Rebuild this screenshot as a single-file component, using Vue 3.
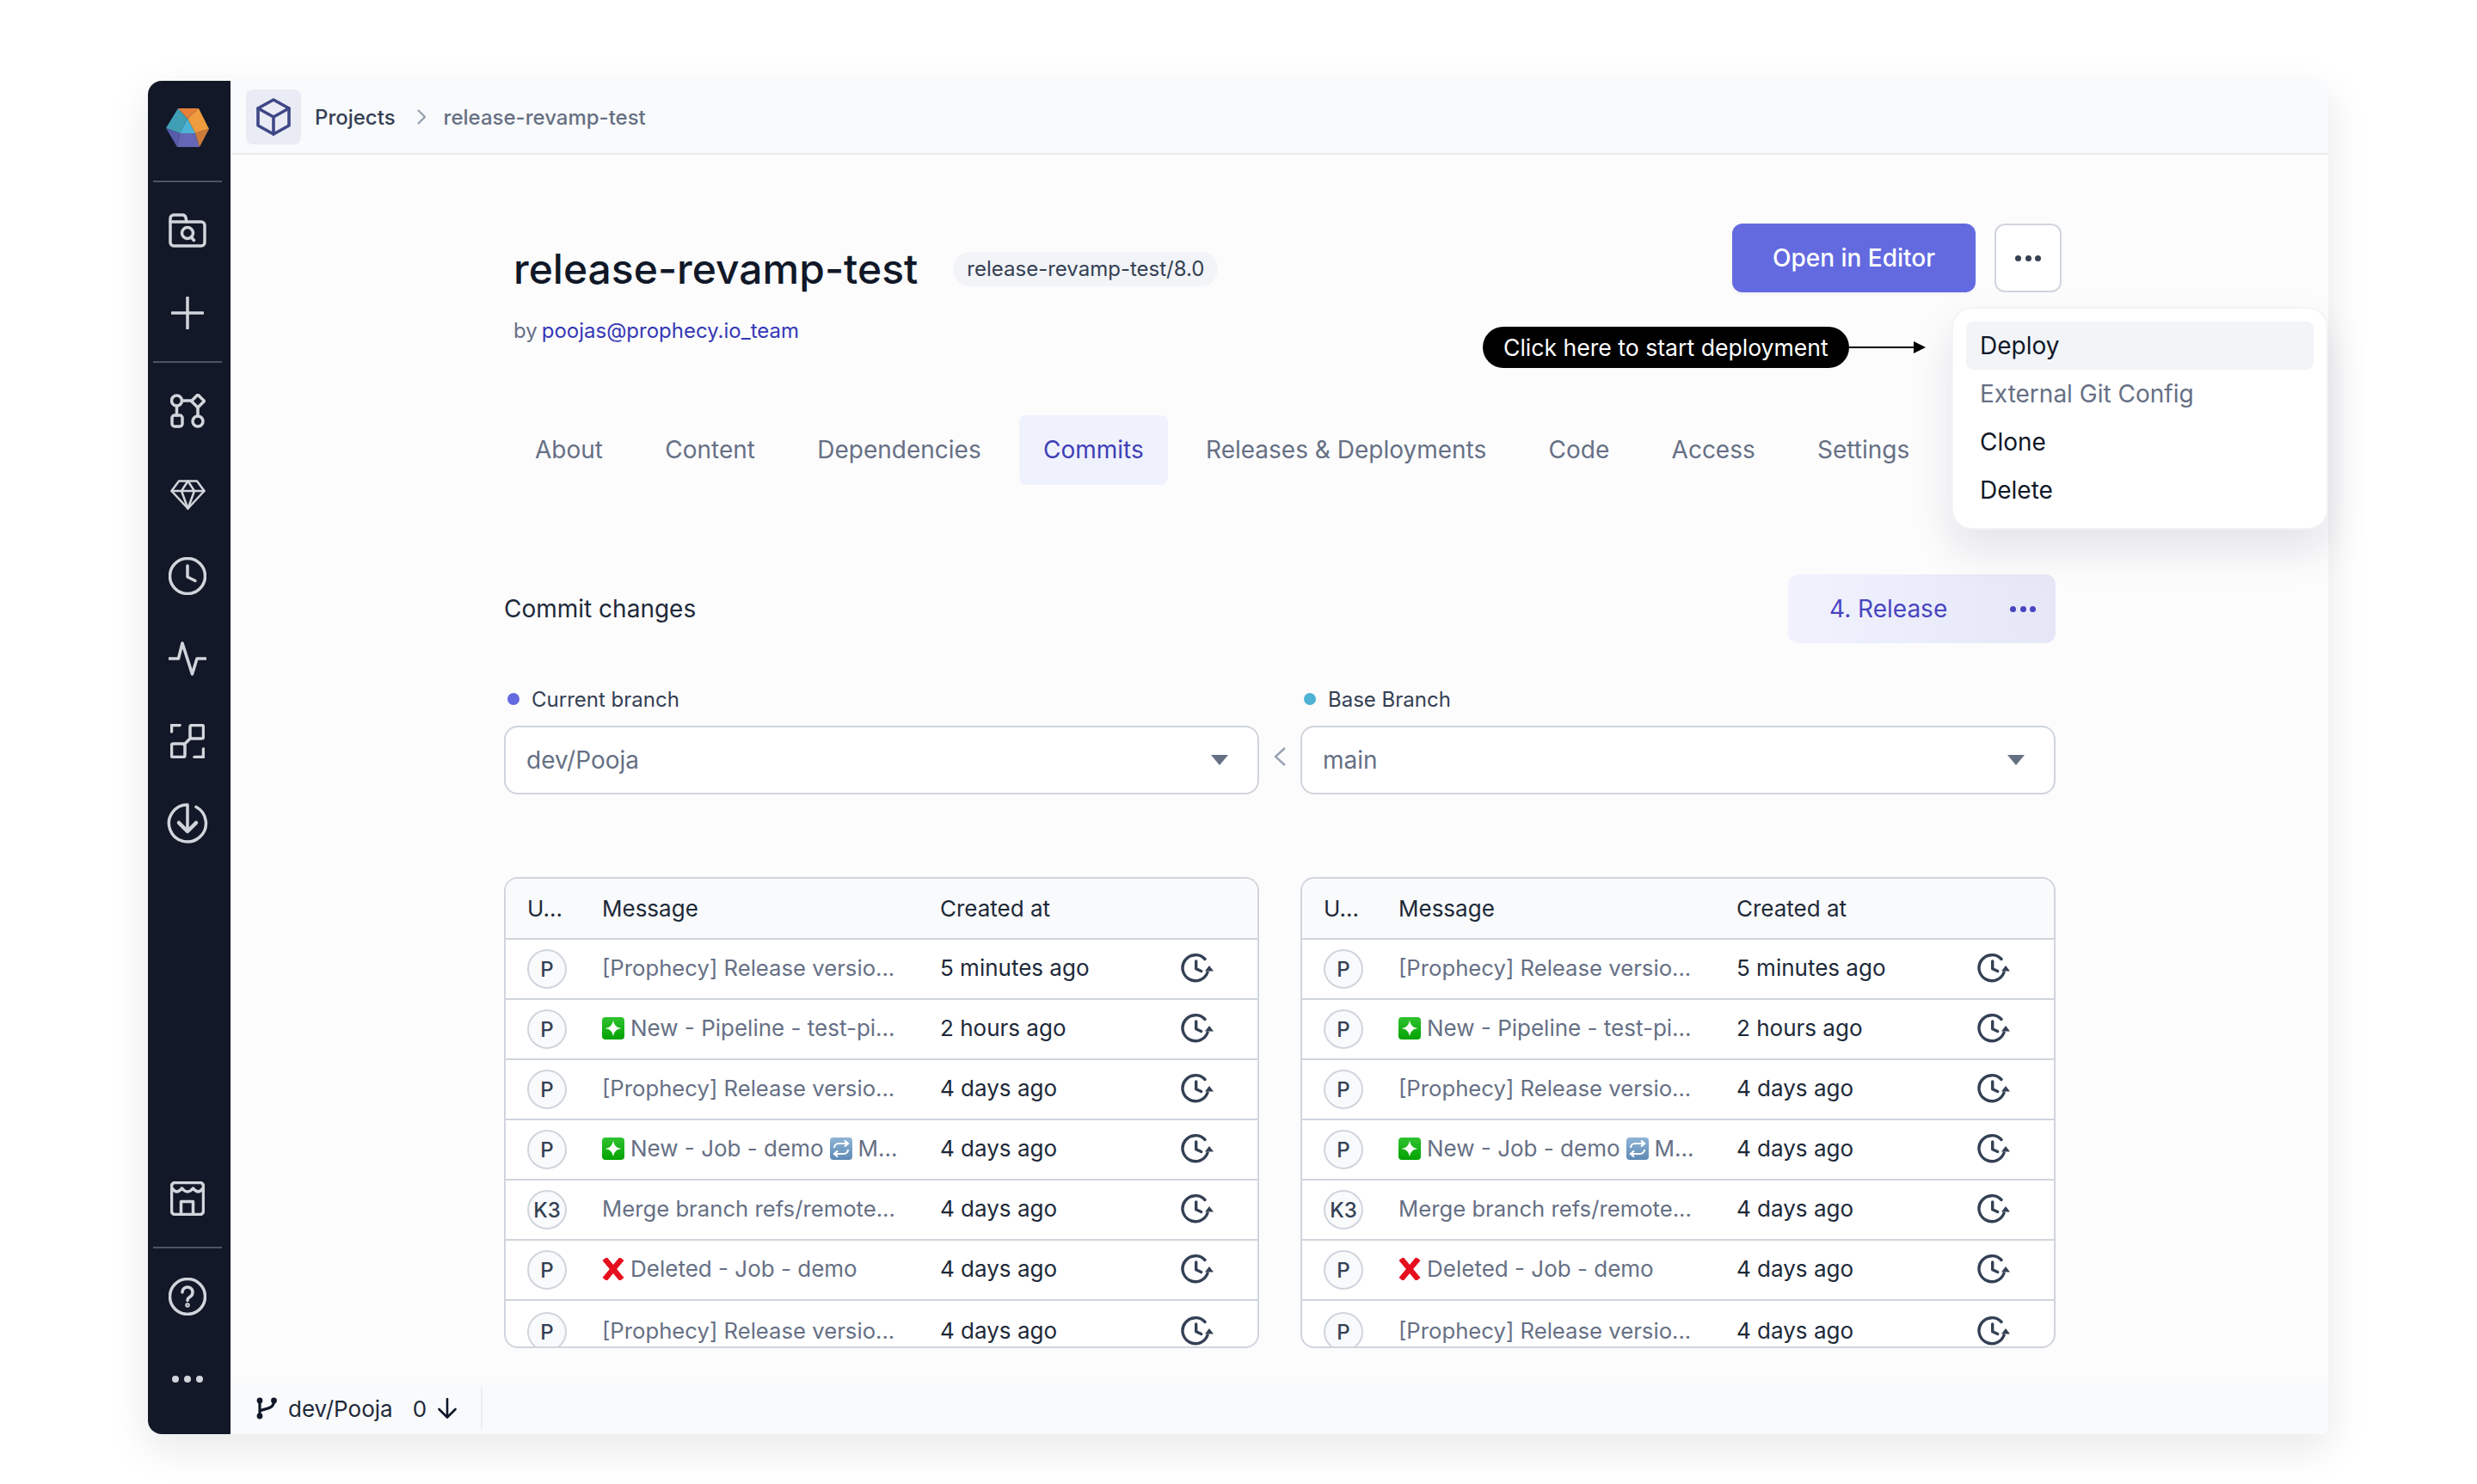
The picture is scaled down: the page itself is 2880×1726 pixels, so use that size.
<script setup>
const rows = [
  { a: 'P', icon: 'new', text: '[Prophecy] Release versio...', plain: true, time: '5 minutes ago' },
  { a: 'P', icon: 'new', text: 'New - Pipeline - test-pi...', time: '2 hours ago' },
  { a: 'P', icon: 'new', text: '[Prophecy] Release versio...', plain: true, time: '4 days ago' },
  { a: 'P', icon: 'new', text: 'New - Job - demo', extra: 'M...', time: '4 days ago' },
  { a: 'K3', icon: 'new', text: 'Merge branch refs/remote...', plain: true, time: '4 days ago' },
  { a: 'P', icon: 'del', text: 'Deleted - Job - demo', time: '4 days ago' },
  { a: 'P', icon: 'new', text: '[Prophecy] Release versio...', plain: true, time: '4 days ago' }
]
const tables = ['left', 'right']
const tabs = ['About', 'Content', 'Dependencies', 'Commits', 'Releases & Deployments', 'Code', 'Access', 'Settings']
const menu = ['Deploy', 'External Git Config', 'Clone', 'Delete']
</script>

<template>
  <div class="page">
    <svg width="0" height="0" class="defs">
      <defs>
        <linearGradient id="greenFill" x1="0" y1="0" x2="0" y2="1">
          <stop offset="0" stop-color="#2fc32f" />
          <stop offset="1" stop-color="#03a203" />
        </linearGradient>
        <linearGradient id="blueFill" x1="0" y1="0" x2="0" y2="1">
          <stop offset="0" stop-color="#8fb4d6" />
          <stop offset="1" stop-color="#5f8ab5" />
        </linearGradient>
      </defs>
    </svg>
    <div class="window">
      <aside class="rail">
        <div class="rail-logo">
          <svg width="50" height="46" viewBox="0 0 50 46">
            <polygon points="14,0 25,12 16,29 0,23" fill="#3f9fb5" />
            <polygon points="14,0 38,0 25,12" fill="#e57f3a" />
            <polygon points="38,0 50,24 34,29 25,12" fill="#ee9c3e" />
            <polygon points="25,12 34,29 16,29" fill="#4db2d4" />
            <polygon points="0,23 16,29 13,45" fill="#575cab" />
            <polygon points="16,29 34,29 39,45 13,45" fill="#6467b5" />
            <polygon points="50,24 39,45 34,29" fill="#cd7c3c" />
          </svg>
        </div>
        <div class="rail-sep"></div>
        <div class="rail-group">
          <div class="rail-item">
            <svg width="44" height="40" viewBox="0 0 44 40" class="ico">
              <path d="M2 11V6a4 4 0 0 1 4-4h10a4 4 0 0 1 4 3l1 5h17a4 4 0 0 1 4 4v20a4 4 0 0 1-4 4H6a4 4 0 0 1-4-4Z" />
              <path d="M2 10h19" />
              <circle cx="22" cy="23" r="6.5" />
              <path d="M26.5 28l3 3.5" />
            </svg>
          </div>
          <div class="rail-item">
            <svg width="38" height="38" viewBox="0 0 38 38" class="ico"><path d="M19 1v36M1 19h36" /></svg>
          </div>
        </div>
        <div class="rail-sep"></div>
        <div class="rail-group">
          <div class="rail-item">
            <svg width="41" height="40" viewBox="0 0 41 40" class="ico">
              <circle cx="7.5" cy="8" r="6" />
              <path d="M32 1l7.500 7.500L32 16l-7.500-7.500Z" />
              <rect x="2" y="25" width="12" height="13" rx="3" />
              <circle cx="32" cy="32" r="6" />
              <path d="M13.500 8h11M7.500 14v11M32 16v10" />
            </svg>
          </div>
          <div class="rail-item gem">
            <svg width="41" height="35" viewBox="0 0 41 35" class="ico thin">
              <path d="M10 1.500h21l8.500 11.500L20.500 33.500 1.500 13Z" />
              <path d="M1.500 13h38M13 13l7.500-11.500L28 13M13 13l7.500 20.500L28 13" />
            </svg>
          </div>
          <div class="rail-item">
            <svg width="44" height="44" viewBox="0 0 44 44" class="ico">
              <circle cx="22" cy="22" r="20.500" />
              <path d="M22 10v13l9 4.500" />
            </svg>
          </div>
          <div class="rail-item">
            <svg width="44" height="40" viewBox="0 0 44 40" class="ico">
              <path d="M1 20h10.500L16 2l11.500 36L33 20h10" />
            </svg>
          </div>
          <div class="rail-item">
            <svg width="40" height="40" viewBox="0 0 40 40" class="ico">
              <path d="M1.500 9V1.500H11M28 38.500h10.500V29" />
              <rect x="23" y="1.500" width="15.500" height="15.500" rx="2" />
              <rect x="1.500" y="23" width="15.500" height="15.500" rx="2" />
              <path d="M16 24l8-8" />
            </svg>
          </div>
          <div class="rail-item">
            <svg width="48" height="48" viewBox="0 0 48 48" class="ico">
              <path d="M34 4.500A21.500 21.500 0 1 1 24 2v30" />
              <path d="M14 23l10 10 10-10" class="heavy" />
            </svg>
          </div>
        </div>
        <div class="rail-spacer"></div>
        <div class="rail-group">
          <div class="rail-item">
            <svg width="40" height="40" viewBox="0 0 40 40" class="ico">
              <rect x="1.500" y="1.500" width="37" height="37" rx="4" />
              <path d="M2 8Q7.500 16 13.500 8Q20 16 26.500 8Q32.500 16 38 8" />
              <path d="M12.500 38V23.500h14V38" />
            </svg>
          </div>
        </div>
        <div class="rail-sep"></div>
        <div class="rail-group">
          <div class="rail-item">
            <svg width="44" height="44" viewBox="0 0 44 44" class="ico">
              <circle cx="22" cy="22" r="20.500" />
              <path d="M16 17a6 6 0 1 1 9 5.200c-2 1.100-3 2.300-3 4.300" />
              <circle cx="22" cy="32" r="1" />
            </svg>
          </div>
          <div class="rail-item">
            <span class="dots light"><i></i><i></i><i></i></span>
          </div>
        </div>
      </aside>

      <div class="main">
        <header class="crumbs">
          <div class="crumb-box">
            <svg width="40" height="44" viewBox="0 0 40 44" class="cube">
              <path d="M20 2l18 10v20L20 42 2 32V12Z" />
              <path d="M2 12l18 10 18-10M20 22v20" />
            </svg>
          </div>
          <span class="crumb-first">Projects</span>
          <svg width="10" height="18" viewBox="0 0 10 18" class="crumb-chev"><path d="M1 1l8 8-8 8" /></svg>
          <span class="crumb-last">release-revamp-test</span>
        </header>

        <main class="content">
          <div class="head">
            <div class="head-left">
              <div class="title-line">
                <h1 class="title">release-revamp-test</h1>
                <span class="tag">release-revamp-test/8.0</span>
              </div>
              <div class="by">by<a class="owner">poojas@prophecy.io_team</a></div>
            </div>
            <div class="head-actions">
              <button class="primary">Open in Editor</button>
              <button class="more"><span class="dots dark"><i></i><i></i><i></i></span></button>
            </div>
          </div>

          <nav class="tabs">
            <span v-for="t in tabs" :key="t" class="tab" :class="{ active: t === 'Commits' }">{{ t }}</span>
          </nav>

          <div class="commit-row">
            <span class="commit-title">Commit changes</span>
            <div class="release">
              <span>4. Release</span>
              <span class="dots blue"><i></i><i></i><i></i></span>
            </div>
          </div>

          <div class="pair labels">
            <div class="label"><i class="dot purple"></i>Current branch</div>
            <div class="label"><i class="dot teal"></i>Base Branch</div>
          </div>

          <div class="pair">
            <div class="select">
              <span>dev/Pooja</span>
              <svg width="20" height="12" viewBox="0 0 20 12"><path d="M0 0h20L10 12Z" fill="#667085" /></svg>
            </div>
            <div class="select">
              <span>main</span>
              <svg width="20" height="12" viewBox="0 0 20 12"><path d="M0 0h20L10 12Z" fill="#667085" /></svg>
            </div>
            <svg class="swap" width="14" height="22" viewBox="0 0 14 22"><path d="M13 1L2 11l11 10" /></svg>
          </div>

          <div class="pair tables">
            <div v-for="side in tables" :key="side" class="table">
              <div class="thead">
                <span>U...</span>
                <span>Message</span>
                <span>Created at</span>
              </div>
              <div v-for="(r, i) in rows" :key="i" class="trow">
                <span class="avatar">{{ r.a }}</span>
                <span class="msg" :class="{ plain: r.plain }">
                  <template v-if="!r.plain">
                    <svg v-if="r.icon === 'new'" width="26" height="26" viewBox="0 0 26 26" class="emoji">
                      <rect width="26" height="26" rx="4" fill="url(#greenFill)" />
                      <path d="M13 3.500c.9 5.800 3.700 8.600 9.500 9.500-5.800.9-8.600 3.700-9.500 9.500-.9-5.800-3.700-8.600-9.500-9.500 5.800-.9 8.600-3.700 9.500-9.500Z" fill="#fff" />
                    </svg>
                    <svg v-else width="26" height="26" viewBox="0 0 26 26" class="emoji">
                      <path d="M3 1l20 24M23 1L3 25" stroke="#e60f1e" stroke-width="6.500" fill="none" />
                    </svg>
                  </template>
                  <span>{{ r.text }}</span>
                  <template v-if="r.extra">
                    <svg width="26" height="26" viewBox="0 0 26 26" class="emoji">
                      <rect width="26" height="26" rx="4" fill="url(#blueFill)" />
                      <path d="M5 12a5 5 0 0 1 5-5h10M17 3.500L21 7l-4 3.500M21 14a5 5 0 0 1-5 5H6M9 15.500L5 19l4 3.500" stroke="#fff" stroke-width="2.200" fill="none" />
                    </svg>
                    <span>{{ r.extra }}</span>
                  </template>
                </span>
                <span class="time">{{ r.time }}</span>
                <svg width="40" height="38" viewBox="0 0 40 38" class="restore">
                  <path d="M28 7.500A15 15 0 1 0 31 23" />
                  <path d="M17.700 10v8.700l6 2.800" />
                  <path d="M33 15l-5 6.500h10Z" class="head-fill" />
                </svg>
              </div>
            </div>
          </div>
        </main>

        <footer class="status">
          <div class="status-branch">
            <svg width="24" height="26" viewBox="0 0 24 26" class="branch bold">
              <path d="M4 4v18M20.500 5C20.500 13 12 13 5 15.500" />
              <circle cx="4" cy="4" r="3.400" class="fill" />
              <circle cx="20.500" cy="4" r="3.400" class="fill" />
              <circle cx="4" cy="22" r="3.400" class="fill" />
            </svg>
            <span>dev/Pooja</span>
            <span class="count">0</span>
            <svg width="22" height="24" viewBox="0 0 22 24" class="branch"><path d="M11 1v21M1.500 13l9.500 9.500 9.500-9.500" /></svg>
          </div>
        </footer>

        <div class="hint">
          <span class="hint-pill">Click here to start deployment</span>
          <svg width="89" height="16" viewBox="0 0 89 16"><path d="M0 8h80" stroke="#000" stroke-width="2" /><path d="M75 1l14 7-14 7Z" fill="#000" /></svg>
        </div>

        <div class="menu">
          <div v-for="m in menu" :key="m" class="menu-item" :class="{ on: m === 'Deploy', off: m === 'External Git Config' }">{{ m }}</div>
        </div>
      </div>
    </div>
  </div>
</template>

<style>
html, body { margin: 0; background: #fff; }
</style>

<style scoped>
.page {
  height: 1726px;
  box-sizing: border-box;
  padding: 94px 0 0 172px;
  font-family: Inter, "Liberation Sans", sans-serif;
}
.defs { display: block; height: 0; }
.window {
  width: 2535px;
  height: 1574px;
  display: flex;
  border-radius: 16px 8px 8px 16px;
  background: #fcfcfd;
  box-shadow: 0 16px 48px rgba(16, 24, 40, 0.1);
}
.rail {
  width: 96px;
  flex: none;
  display: flex;
  flex-direction: column;
  background: #121827;
  border-radius: 16px 0 0 16px;
  padding-bottom: 7px;
  box-sizing: border-box;
}
.rail-logo { height: 117px; display: flex; align-items: center; justify-content: center; padding: 0 4px 7px 0; box-sizing: border-box; }
.rail-sep { height: 2px; margin: -1px 10px -1px 6px; background: #4b5563; }
.rail-group { padding: 9px 0; }
.rail-spacer { flex: 1; }
.rail-item { height: 96px; display: flex; align-items: center; justify-content: center; padding-right: 4px; box-sizing: border-box; }
.rail-item.gem { padding-top: 2px; }
.ico { fill: none; stroke: #d1d5db; stroke-width: 3.5; stroke-linecap: round; stroke-linejoin: round; }
.ico.thin { stroke-width: 2.5; }
.ico .heavy { stroke-width: 4.5; }

.dots { display: inline-flex; gap: 4.5px; }
.dots i { width: 7px; height: 7px; border-radius: 50%; background: currentColor; }
.dots.light { color: #d1d5db; gap: 6px; }
.dots.light i { width: 8px; height: 8px; }
.dots.dark { color: #374151; }
.dots.blue { color: #4845c0; }

.main { flex: 1; min-width: 0; display: flex; flex-direction: column; position: relative; }
.crumbs {
  height: 86px;
  flex: none;
  box-sizing: border-box;
  display: flex;
  align-items: center;
  padding-left: 18px;
  background: #f9fafb;
  border-bottom: 2px solid #eaecf0;
  border-radius: 0 8px 0 0;
  font-size: 24px;
}
.crumb-box { width: 64px; height: 64px; border-radius: 8px; background: #e9ecf5; display: flex; align-items: center; justify-content: center; }
.cube { fill: none; stroke: #3f4787; stroke-width: 3.6; stroke-linejoin: round; stroke-linecap: round; }
.crumb-first { margin-left: 16px; font-weight: 500; color: #344054; }
.crumb-chev { margin: 0 21px 0 25px; fill: none; stroke: #98a2b3; stroke-width: 2.4; }
.crumb-last { color: #667085; font-weight: 500; }

.content { flex: 1; min-height: 0; width: 1804px; margin-left: 318px; }
.head { display: flex; justify-content: space-between; align-items: flex-start; padding: 80px 0 0 11px; margin-right: -7px; }
.head-left { padding-top: 21px; }
.title-line { display: flex; align-items: center; gap: 41px; }
.title { margin: 0; font-size: 48px; line-height: 64px; font-weight: 500; color: #101828; }
.tag { height: 40px; line-height: 40px; padding: 0 16px; border-radius: 20px; background: #f2f4f7; font-size: 24px; color: #344054; }
.by { margin-top: 24px; font-size: 24px; line-height: 32px; color: #667085; }
.owner { color: #3538b5; margin-left: 5px; }
.head-actions { display: flex; gap: 22px; }
.primary {
  width: 283px; height: 80px; border: 0; border-radius: 12px;
  background: #636ae0; color: #fff; font: 500 28px Inter, sans-serif;
  box-shadow: 0 2px 4px rgba(16, 24, 40, 0.06);
}
.more {
  width: 78px; height: 80px; padding: 0; border: 2px solid #d0d5dd; border-radius: 12px;
  background: #fff; display: flex; align-items: center; justify-content: center;
}

.tabs { display: flex; gap: 16.3px; margin: 82px 0 0 8px; }
.tab { height: 81px; line-height: 81px; padding: 0 28px; border-radius: 8px; font-size: 28px; color: #667085; white-space: nowrap; }
.tab.active { background: #eff1fd; color: #3f3fb5; }

.commit-row { display: flex; justify-content: space-between; align-items: center; margin-top: 104px; height: 80px; }
.commit-title { font-size: 28px; font-weight: 400; color: #1d2939; }
.release {
  width: 311px; height: 80px; box-sizing: border-box; padding: 0 23px 0 48px;
  display: flex; align-items: center; justify-content: space-between;
  border-radius: 12px; background: linear-gradient(90deg, #f1f2fe, #e5e7f6);
  font-size: 28px; color: #4845c0;
}

.pair { display: grid; grid-template-columns: 878px 878px; column-gap: 48px; position: relative; }
.labels { margin-top: 50px; height: 30px; align-items: center; margin-bottom: 16px; }
.label { display: flex; align-items: center; font-size: 24px; color: #344054; padding-left: 4px; }
.dot { width: 14px; height: 14px; border-radius: 50%; margin-right: 14px; }
.dot.purple { background: #636ae0; }
.dot.teal { background: #4db2d4; }
.select {
  height: 80px; box-sizing: border-box; padding: 0 34px 0 24px;
  display: flex; align-items: center; justify-content: space-between;
  background: #fff; border: 2px solid #d0d5dd; border-radius: 16px;
  font-size: 28px; color: #667085;
}
.swap { position: absolute; left: 895px; top: 25px; fill: none; stroke: #98a2b3; stroke-width: 2.4; }

.tables { margin-top: 96px; }
.table {
  height: 548px; box-sizing: border-box; overflow: hidden;
  background: #fff; border: 2px solid #d0d5dd; border-radius: 16px;
}
.thead, .trow {
  display: grid;
  grid-template-columns: 87px 393px 280px 40px;
  align-items: center;
  padding-left: 25px;
  box-sizing: border-box;
}
.thead {
  height: 71px; background: #f9fafb; border-bottom: 2px solid #d0d5dd;
  font-size: 26px; color: #1d2939;
}
.trow { height: 70px; border-bottom: 2px solid #d0d5dd; font-size: 26px; }
.trow:last-child { height: 72px; border-bottom: 0; }
.avatar {
  width: 46px; height: 46px; box-sizing: border-box; border-radius: 50%;
  border: 2px solid #d0d5dd; background: #f9fafb;
  display: flex; align-items: center; justify-content: center;
  font-size: 24px; font-weight: 500; color: #344054;
}
.msg { display: flex; align-items: center; gap: 7px; color: #667085; white-space: nowrap; padding-bottom: 3px; }
.msg.plain { font-size: 25.7px; }
.emoji { flex: none; }
.time { color: #1d2939; padding-bottom: 3px; }
.restore { fill: none; stroke: #344054; stroke-width: 3.4; stroke-linecap: round; stroke-linejoin: round; }
.restore .head-fill { fill: #344054; stroke: none; }

.status { height: 60px; flex: none; display: flex; align-items: center; background: #f9fafb; border-radius: 0 0 8px 0; }
.status-branch {
  height: 48px; box-sizing: border-box; width: 293px;
  display: flex; align-items: center; padding-left: 30px;
  border-right: 2px solid #eaecf0;
  font-size: 26px; color: #1d2939;
}
.status-branch > span:first-of-type { margin-left: 13px; }
.count { margin: 0 13px 0 23px; }
.branch { fill: none; stroke: #101828; stroke-width: 2.6; stroke-linecap: round; stroke-linejoin: round; flex: none; }
.branch.bold { stroke-width: 3.2; }
.branch .fill { fill: #101828; stroke: none; }

.hint { position: absolute; left: 1456px; top: 286px; display: flex; align-items: center; }
.hint-pill {
  height: 48px; line-height: 48px; padding: 0 24px; border-radius: 24px;
  background: #000; color: #fff; font-size: 26.6px; white-space: nowrap;
}
.menu {
  position: absolute; left: 2001px; top: 263px; width: 438px; box-sizing: border-box;
  height: 259px; padding: 15px 15px; background: #fff;
  border: 2px solid #f2f4f7; border-radius: 24px;
  box-shadow: 0 24px 48px rgba(16, 24, 40, 0.1);
}
.menu-item { height: 56px; line-height: 56px; padding: 0 16px; border-radius: 8px; font-size: 28px; color: #101828; }
.menu-item.on { background: #f2f4f8; }
.menu-item.off { color: #667085; }
</style>
